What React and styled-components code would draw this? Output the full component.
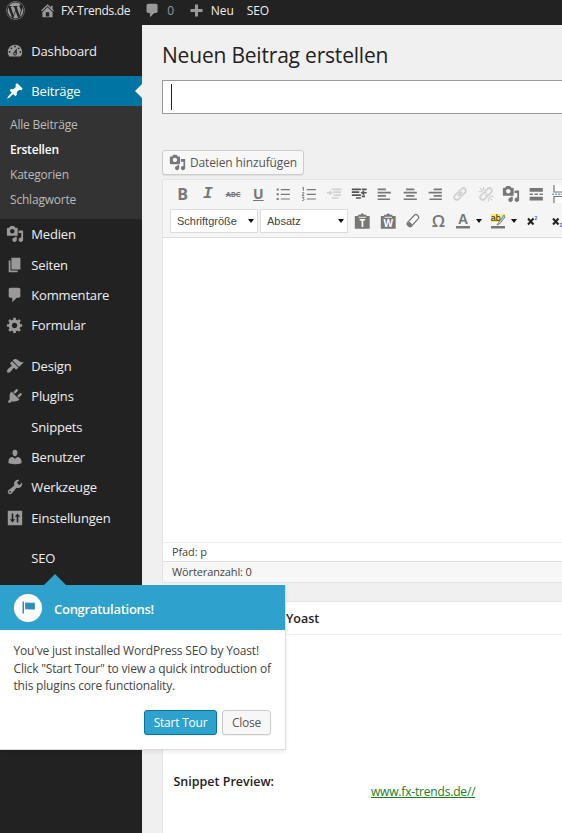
import React from "react";
import styled, { createGlobalStyle, css } from "styled-components";
import { FaWordpress } from "react-icons/fa";

const Global = createGlobalStyle`
  * { box-sizing: border-box; }
  html, body { margin: 0; padding: 0; }
  body { background: #f0f0f0; font-family: "Open Sans", sans-serif; font-size: 13px; color: #444; overflow: hidden; }
`;

const paths = {
  comments: "M5 2h9c1.1 0 2 .9 2 2v7c0 1.1-.9 2-2 2h-2l-5 5v-5H5c-1.1 0-2-.9-2-2V4c0-1.1.9-2 2-2z",
  post: "M10.44 3.02l1.82-1.82 6.36 6.35-1.83 1.82c-1.05-.68-2.48-.57-3.41.36l-.75.75c-.92.93-1.04 2.35-.35 3.41l-1.83 1.82-2.41-2.41-2.8 2.79c-.42.42-3.38 2.71-3.8 2.29s1.86-3.39 2.28-3.81l2.79-2.79L4.1 9.36l1.83-1.82c1.05.69 2.48.57 3.4-.36l.75-.75c.93-.92 1.05-2.35.36-3.41z",
  home: "M16 8.5l1.53 1.53-1.06 1.06L10 4.6l-6.47 6.49-1.06-1.06L10 2.5l4 4v-2h2v4zm-6-2.46l6 5.99V18H4v-5.97zM12 17v-5H8v5h4z",
  dashboard: "M3.76 16h12.48c1.1-1.37 1.76-3.11 1.76-5 0-4.42-3.58-8-8-8s-8 3.58-8 8c0 1.89.66 3.63 1.76 5zM10 4c.55 0 1 .45 1 1s-.45 1-1 1-1-.45-1-1 .45-1 1-1zM6 6c.55 0 1 .45 1 1s-.45 1-1 1-1-.45-1-1 .45-1 1-1zm8 0c.55 0 1 .45 1 1s-.45 1-1 1-1-.45-1-1 .45-1 1-1zm-5.37 5.55L12 7v6c0 1.1-.9 2-2 2s-2-.9-2-2c0-.57.24-1.08.63-1.45zM4 10c.55 0 1 .45 1 1s-.45 1-1 1-1-.45-1-1 .45-1 1-1zm12 0c.55 0 1 .45 1 1s-.45 1-1 1-1-.45-1-1 .45-1 1-1zm-5 3c0-.55-.45-1-1-1s-1 .45-1 1 .45 1 1 1 1-.45 1-1z",
  media: "M13 11V4c0-.55-.45-1-1-1h-1.67L9 1H5L3.67 3H2c-.55 0-1 .45-1 1v7c0 .55.45 1 1 1h10c.55 0 1-.45 1-1zM7 4.5c1.38 0 2.5 1.12 2.5 2.5S8.38 9.5 7 9.5 4.5 8.38 4.5 7 5.62 4.5 7 4.5zM14 6h5v10.5c0 1.38-1.12 2.5-2.5 2.5S14 17.88 14 16.5s1.12-2.5 2.5-2.5c.17 0 .34.02.5.05V9h-3V6zm-4 8.05V13h2v3.5c0 1.38-1.12 2.5-2.5 2.5S7 17.88 7 16.5 8.12 14 9.5 14c.17 0 .34.02.5.05z",
  page: "M6 15V2h10v13H6zm-1 1h8v2H3V5h2v11z",
  generic: "M18 12h-2.18c-.17.7-.44 1.35-.81 1.93l1.54 1.54-2.1 2.1-1.54-1.54c-.58.36-1.23.63-1.91.79V19H8v-2.18c-.68-.16-1.33-.43-1.91-.79l-1.54 1.54-2.12-2.12 1.54-1.54c-.36-.58-.63-1.23-.79-1.91H1V9.03h2.17c.16-.7.44-1.35.8-1.94L2.43 5.55l2.1-2.1 1.54 1.54c.58-.37 1.24-.64 1.93-.81V2h3v2.18c.68.16 1.33.43 1.91.79l1.54-1.54 2.12 2.12-1.54 1.54c.36.59.64 1.24.8 1.94H18V12zm-8.5 1.5c1.66 0 3-1.34 3-3s-1.34-3-3-3-3 1.34-3 3 1.34 3 3 3z",
  appearance: "M14.48 11.06L7.41 3.99l1.5-1.5c.5-.56 2.3-.47 3.51.32 1.21.8 1.43 1.28 2.91 2.1 1.18.64 2.45 1.26 4.45.85zm-.71.71L6.7 4.7 4.93 6.47c-.39.39-.39 1.02 0 1.41l1.06 1.06c.39.39.39 1.03 0 1.42-.6.6-1.43 1.11-2.21 1.69-.35.26-.7.53-1.01.84C1.43 14.23.4 16.08 1.4 17.07c.99 1 2.84-.03 4.18-1.36.31-.31.58-.66.85-1.02.57-.78 1.08-1.61 1.69-2.21.39-.39 1.02-.39 1.41 0l1.06 1.06c.39.39 1.02.39 1.41 0z",
  plugins: "M13.11 4.36L9.87 7.6 8 5.73l3.24-3.24c.35-.34 1.05-.2 1.56.32.52.51.66 1.21.31 1.55zm-8 1.77l.91-1.12 9.01 9.01-1.19.84c-.71.71-2.63 1.16-3.82 1.16H6.14L4.9 17.26c-.59.59-1.54.59-2.12 0-.59-.58-.59-1.53 0-2.12l1.24-1.24v-3.88c0-1.13.4-3.19 1.09-3.89zm7.26 3.97l3.24-3.24c.34-.35 1.04-.21 1.55.31.52.51.66 1.21.31 1.55l-3.24 3.25z",
  users: "M10 9.25c-2.27 0-2.73-3.44-2.73-3.44C7 4.02 7.82 2 9.97 2c2.16 0 2.98 2.02 2.71 3.81 0 0-.41 3.44-2.68 3.44zm0 2.57L12.72 10c2.39 0 4.52 2.33 4.52 4.53v2.49s-3.65 1.13-7.24 1.13c-3.65 0-7.24-1.13-7.24-1.13v-2.49c0-2.25 1.94-4.48 4.47-4.48z",
  tools: "M16.68 9.77c-1.34 1.34-3.3 1.67-4.95.99l-5.41 6.52c-.99.99-2.59.99-3.58 0s-.99-2.59 0-3.57l6.52-5.42c-.68-1.65-.35-3.61.99-4.95 1.28-1.28 3.12-1.62 4.72-1.06l-2.89 2.89 2.82 2.82 2.86-2.87c.53 1.58.18 3.39-1.08 4.65zM3.81 16.21c.4.39 1.04.39 1.43 0 .4-.4.4-1.04 0-1.43-.39-.4-1.03-.4-1.43 0-.39.39-.39 1.03 0 1.43z",
  settings: "M2.5 2h15c.3 0 .5.2.5.5v15c0 .3-.2.5-.5.5h-15c-.3 0-.5-.2-.5-.5v-15c0-.3.2-.5.5-.5zM6.3 5v6.500H4.200L7.200 15l3-3.500H8.100V5zM11.900 15V8.500H9.800L12.800 5l3 3.500H13.700V15z",
  plus: "M8 2h4v6h6v4h-6v6H8v-6H2V8h6z",
  flag: "M4 18V2H2v16h2zm1.500-5.500V3.500c4-.8 8 .4 13 0v9c-4.500.6-9-.8-13 0z",
  ul: "M2 3h2.500v2.500H2zM7 3.500h11v1.500H7zM2 8.800h2.500v2.500H2zM7 9.300h11v1.500H7zM2 14.500h2.500V17H2zM7 15h11v1.500H7z",
  left: "M2 3h10v2H2zM2 7h16v2H2zM2 11h10v2H2zM2 15h15v2H2z",
  center: "M5 3h10v2H5zM2 7h16v2H2zM5 11h10v2H5zM2 15h16v2H2z",
  right: "M8 3h10v2H8zM2 7h16v2H2zM8 11h10v2H8zM3 15h15v2H3z",
  indent: "M1 3h11v2H1zM1 6.500h9v2H1zM1 10h11v2H1zM6 13.500h6v2H6zM13 3h6v2h-6zM13 11.500h4v2h-4zM19 7.200v2h-3v2.300L11.500 8.200 16 5v2.200z",
  outdent: "M7 3h12v2H7zM9 6.500h9v2H9zM9 10h9v2H9zM7 13.500h8v2H7zM1 7.200h3V5l4.500 3.200L4 11.500V9.200H1z",
  more: "M2 2.500h16V7H2zM2 9h4v2H2zM8 9h4v2H8zM14 9h4v2h-4zM2 13h16v4.500H2z",
};

const Svg = styled.svg`
  display: block;
  flex: none;
  width: ${(p) => p.$size || 18}px;
  height: ${(p) => p.$size || 18}px;
  color: ${(p) => p.$color || "#999"};
  overflow: visible;
`;
const Icon = ({ name, size, color }) => (
  <Svg viewBox="0 0 20 20" $size={size} $color={color}>
    <path d={paths[name]} fill="currentColor" fillRule="evenodd" />
  </Svg>
);

const Screen = styled.div`
  position: relative;
  width: 562px;
  height: 833px;
  overflow: hidden;
  display: flex;
  flex-direction: column;
`;
const AdminBar = styled.header`
  height: 25px;
  flex: none;
  display: flex;
  align-items: center;
  padding: 0 0 4px 6px;
  background: #222;
  color: #eee;
  line-height: 20px;
`;
const BarItem = styled.span`
  display: flex;
  align-items: center;
  gap: ${(p) => p.$gap || 0}px;
  margin-right: ${(p) => p.$after || 0}px;
  color: ${(p) => (p.$muted ? "#999" : "#eee")};
  font-size: 12px;
  letter-spacing: ${(p) => p.$track || 0}px;
  svg { color: #999; }
`;
const Body = styled.div`
  flex: 1;
  min-height: 0;
  display: flex;
`;
const Sidebar = styled.nav`
  width: 142px;
  flex: none;
  background: #222;
  padding-top: 11px;
`;
const MenuItem = styled.div`
  height: 30.4px;
  display: flex;
  align-items: center;
  justify-content: space-between;
  margin-bottom: ${(p) => p.$after || 0}px;
  background: ${(p) => (p.$active ? "#0074a2" : "transparent")};
  color: ${(p) => (p.$active ? "#fff" : "#eee")};
  font-size: 13px;
  letter-spacing: -0.17px;
`;
const MenuLabel = styled.span`
  display: grid;
  grid-template-columns: 18px auto;
  column-gap: 7.300px;
  align-items: center;
  padding-left: 6px;
`;
const Notch = styled.span`
  border: 7px solid transparent;
  border-right-color: #f0f0f0;
  border-left: 0;
`;
const SubMenu = styled.div`
  background: #333;
  padding: 6px 0 6.500px 10px;
  height: 112.6px;
`;
const SubItem = styled.div`
  height: 25px;
  line-height: 25px;
  font-size: 12px;
  letter-spacing: -0.2px;
  color: ${(p) => (p.$current ? "#fff" : "#bbb")};
  font-weight: ${(p) => (p.$current ? 600 : 400)};
`;

const Main = styled.main`
  flex: 1;
  min-width: 0;
  padding-left: 20px;
  display: flex;
  flex-direction: column;
`;
const PageTitle = styled.h1`
  margin: 15px 0 10px;
  font-size: 21px;
  letter-spacing: -0.2px;
  font-weight: 400;
  line-height: 30px;
  color: #222;
`;
const TitleField = styled.div`
  height: 34px;
  flex: none;
  border: 1px solid #999;
  border-right: 0;
  background: #fff;
  display: flex;
  align-items: center;
  padding-left: 8px;
`;
const Caret = styled.span`
  width: 1px;
  height: 26px;
  background: #222;
`;
const button = css`
  display: flex;
  align-items: center;
  justify-content: center;
  height: 25px;
  border: 1px solid #ccc;
  border-radius: 3px;
  background: #f7f7f7;
  color: #555;
  box-shadow: 0 1px 0 rgba(0, 0, 0, 0.06);
`;
const MediaButton = styled.div`
  ${button}
  width: 142px;
  margin-top: 36px;
  gap: 4px;
  font-size: 12px;
  letter-spacing: -0.12px;
  flex: none;
`;
const Editor = styled.section`
  margin-top: 4px;
  border: 1px solid #e3e3e3;
  border-right: 0;
  background: #fff;
  flex: none;
`;
const Toolbar = styled.div`
  height: 58px;
  padding-left: 7px;
  background: #f5f5f5;
  border-bottom: 1px solid #ddd;
`;
const ToolRow = styled.div`
  display: flex;
  align-items: center;
  height: 27.500px;
`;
const Tool = styled.span`
  width: ${(p) => (p.$split ? 34.5 : 25.25)}px;
  gap: 4px;
  flex: none;
  display: flex;
  justify-content: center;
  align-items: center;
  color: #777;
  opacity: ${(p) => (p.$off ? 0.28 : 1)};
`;
const Glyph = styled.span`
  font-size: ${(p) => p.$size || 17}px;
  line-height: 20px;
  font-weight: ${(p) => p.$weight || 700};
  font-style: ${(p) => (p.$italic ? "italic" : "normal")};
  font-family: ${(p) => p.$font || '"Open Sans"'}, sans-serif;
  text-decoration: ${(p) => p.$line || "none"};
`;
const Select = styled.span`
  width: 88px;
  height: 24px;
  margin-right: 2px;
  flex: none;
  display: flex;
  align-items: center;
  justify-content: space-between;
  padding: 0 3px 0 6px;
  border: 1px solid #ddd;
  background: #fff;
  font: 11px "Liberation Sans", sans-serif;
  color: #444;
`;
const Down = styled.span`
  flex: none;
  border: 3.500px solid transparent;
  border-top: 4px solid #111;
  border-bottom: 0;
`;
const Canvas = styled.div`height: 304px;`;
const StatusLine = styled.div`
  height: ${(p) => (p.$tinted ? 21 : 19)}px;
  display: flex;
  align-items: center;
  padding: 0 0 ${(p) => (p.$tinted ? 1 : 2)}px 9px;
  border-top: 1px solid ${(p) => (p.$tinted ? "#ddd" : "#eee")};
  background: ${(p) => (p.$tinted ? "#f7f7f7" : "#fff")};
  font-size: 11px;
  letter-spacing: -0.12px;
  color: #444;
`;
const MetaBox = styled.section`
  margin-top: 18px;
  flex: 1;
  border: 1px solid #e5e5e5;
  border-width: 1px 0 0 1px;
  background: #fff;
  color: #222;
`;
const MetaHead = styled.h2`
  margin: 0;
  height: 33px;
  line-height: 33px;
  padding-left: 10px;
  border-bottom: 1px solid #eee;
  font-size: 12.500px;
  font-weight: 600;
`;
const SnippetRow = styled.div`
  display: grid;
  grid-template-columns: 197.500px auto;
  padding: 137px 0 0 10.500px;
  font-size: 12px;
  line-height: 20px;
`;
const SnippetLabel = styled.span`
  font-size: 12.500px;
  font-weight: 600;
`;
const SnippetUrl = styled.a`
  margin-top: 10px;
  letter-spacing: -0.18px;
  color: #1b7d1b;
  text-decoration: underline;
`;

const Pointer = styled.aside`
  position: absolute;
  left: 0;
  top: 585px;
  width: 286px;
  height: 165px;
  background: #fff;
  border: solid #ddd;
  border-width: 0 1px 1px 0;
  box-shadow: 0 2px 4px rgba(0, 0, 0, 0.08);
`;
const PointerArrow = styled.span`
  position: absolute;
  left: 44px;
  top: -11px;
  border: 11px solid transparent;
  border-bottom-color: #2ea2cc;
  border-top: 0;
`;
const PointerHead = styled.h3`
  margin: 0;
  height: 45px;
  padding-left: 14px;
  display: flex;
  align-items: center;
  gap: 12px;
  background: #2ea2cc;
  color: #fff;
  font-size: 13px;
  letter-spacing: -0.27px;
  font-weight: 600;
`;
const PointerTitle = styled.span`padding-top: 2px;`;
const Badge = styled.span`
  width: 28px;
  height: 28px;
  border-radius: 50%;
  background: #fff;
  display: grid;
  place-items: center;
`;
const PointerText = styled.p`
  margin: 12px 0 0 13.500px;
  font-size: 12px;
  letter-spacing: -0.18px;
  line-height: 17.600px;
  white-space: pre-line;
`;
const PointerActions = styled.div`
  display: flex;
  justify-content: flex-end;
  gap: 5px;
  padding: 15px 14px 0 0;
`;
const PointerButton = styled.span`
  ${button}
  width: ${(p) => (p.$primary ? 73 : 49)}px;
  font-size: 12px;
  letter-spacing: -0.22px;
  ${(p) => p.$primary && css`
    background: #2ea2cc;
    border-color: #0074a2;
    color: #fff;
  `}
`;

const menuTop = [{ icon: "dashboard", label: "Dashboard", after: 9.6 }, { icon: "post", label: "Beiträge", active: true }];
const submenu = ["Alle Beiträge", "Erstellen", "Kategorien", "Schlagworte"];
const menuRest = [
  { icon: "media", label: "Medien" },
  { icon: "page", label: "Seiten" },
  { icon: "comments", label: "Kommentare" },
  { icon: "generic", label: "Formular", after: 10.2 },
  { icon: "appearance", label: "Design" },
  { icon: "plugins", label: "Plugins" },
  { label: "Snippets" },
  { icon: "users", label: "Benutzer" },
  { icon: "tools", label: "Werkzeuge" },
  { icon: "settings", label: "Einstellungen", after: 9.8 },
  { label: "SEO" },
];

const Entry = ({ icon, label, active, after }) => (
  <MenuItem $active={active} $after={after}>
    <MenuLabel>
      {icon ? <Icon name={icon} color={active ? "#fff" : "#999"} /> : <span />}
      {label}
    </MenuLabel>
    {active && <Notch />}
  </MenuItem>
);

const Btn = ({ name, off, size = 16.5, color = "#777" }) => (
  <Tool $off={off}><Icon name={name} size={size} color={color} /></Tool>
);

const OrderedList = () => (
  <Svg viewBox="0 0 20 20" $size={16.5} $color="#777">
    <path d="M7 3.500h11V5H7zM7 9.300h11v1.500H7zM7 15h11v1.500H7z" fill="currentColor" />
    <path d="M1.500 2.500 3 1.500V6M1.200 8.200h2.300v1.300L1.200 11.500h2.600M1.200 13.800h2.500L2.500 15.500c2 0 1.500 2.500-1.300 2" fill="none" stroke="currentColor" strokeWidth="1.100" />
  </Svg>
);
const Link = ({ broken }) => (
  <Svg viewBox="0 0 20 20" $size={16} $color="#777">
    <g fill="none" stroke="currentColor" strokeWidth="2.200" strokeLinecap="round">
      <path d="M9 6.500 12 3.500c3-2.500 7 1 4.500 4.500l-3 3c-1 1-2.500 1-3.500.5" />
      <path d="M11 13.500 8 16.500c-3 2.500-7-1-4.500-4.500l3-3c1-1 2.500-1 3.500-.5" />
      {broken ? <path d="M3 3l3 3M7 1.500v3M1.500 7h3M14 14l3 3M13 16v3M16 13h3" strokeWidth="1.500" /> : <path d="M8 12l4-4" />}
    </g>
  </Svg>
);
const PageBreak = () => (
  <Svg viewBox="0 0 20 20" $size={20} $color="#777">
    <path d="M3 1v7h15V1M3 19v-6.500h15V19" fill="#fff" stroke="currentColor" strokeWidth="1.200" />
    <path d="M1 10.200h18" stroke="#5584bb" strokeDasharray="2 1" />
  </Svg>
);
const Clipboard = ({ letter }) => (
  <Svg viewBox="0 0 20 20" $size={16.5} $color="#777">
    <path d="M1 3.500h4V2h3C8 0 12 0 12 2h3v1.500h4V19H1z" fill="currentColor" />
    <path d="M5.500 5.200h9" stroke="#f5f5f5" strokeWidth="1.200" />
    <text x="10" y="16.500" textAnchor="middle" fontSize="12" fontWeight="700" fontFamily="Open Sans, sans-serif" fill="#fff">{letter}</text>
  </Svg>
);
const Eraser = () => (
  <Svg viewBox="0 0 20 20" $size={16} $color="#777">
    <path d="M3 12 12 2.500c1-1 2-1 3 0l1.500 1.500c1 1 1 2 0 3L8 16.500c-1 1-2 1-3 0L3 14.800c-.8-.8-.8-2 0-2.800z" fill="#fff" stroke="currentColor" strokeWidth="1.600" />
    <path d="M3 13 5.500 10.500 9 14l-2 2.500H5L2.500 15z" fill="currentColor" />
  </Svg>
);
const TextColor = () => (
  <Svg viewBox="0 0 16 18" $size={18} $color="#777">
    <text x="8" y="12" textAnchor="middle" fontSize="14" fontWeight="700" fontFamily="Liberation Sans, sans-serif" fill="currentColor">A</text>
    <path d="M1 14h14v2.500H1z" fill="currentColor" />
  </Svg>
);
const Highlight = () => (
  <Svg viewBox="0 0 16 18" $size={18} $color="#777">
    <path d="M1 2h9v8H1zM11 2h4v3h-4z" fill="#f5ee55" />
    <text x="0.800" y="9" fontSize="9" fontFamily="Liberation Sans, sans-serif" fill="#222">ab</text>
    <path d="M14 3 8.500 10.500 7 13l3-1.500L15 5z" fill="#bcd0dc" stroke="#777" strokeWidth=".9" />
    <path d="M1 14h14v2.500H1z" fill="currentColor" />
  </Svg>
);
const Script = ({ low }) => (
  <Svg viewBox="0 0 16 16" $size={16}>
    <path d="M3 5.500l5.500 6M8.500 5.500l-5.500 6" stroke="#222" strokeWidth="2" />
    <text x="9.500" y={low ? 13.500 : 6.500} fontSize="5" fontWeight="700" fontFamily="Liberation Sans, sans-serif" fill="#3a67c2">2</text>
  </Svg>
);

export default function App() {
  return (
    <Screen>
      <Global />
      <AdminBar>
        <BarItem $after={13.5}><FaWordpress size={19} /></BarItem>
        <BarItem $gap={5.5} $after={14} $track={-0.3}><Icon name="home" size={17} />FX-Trends.de</BarItem>
        <BarItem $gap={6} $after={15} $muted><Icon name="comments" size={17} />0</BarItem>
        <BarItem $gap={6.5} $after={13}><Icon name="plus" size={15} />Neu</BarItem>
        <BarItem $track={-0.2}>SEO</BarItem>
      </AdminBar>
      <Body>
        <Sidebar>
          {menuTop.map((m) => <Entry key={m.label} {...m} />)}
          <SubMenu>
            {submenu.map((s) => <SubItem key={s} $current={s === "Erstellen"}>{s}</SubItem>)}
          </SubMenu>
          {menuRest.map((m) => <Entry key={m.label} {...m} />)}
        </Sidebar>
        <Main>
          <PageTitle>Neuen Beitrag erstellen</PageTitle>
          <TitleField><Caret /></TitleField>
          <MediaButton><Icon name="media" size={17} color="#777" />Dateien hinzufügen</MediaButton>
          <Editor>
            <Toolbar>
              <ToolRow>
                <Tool><Glyph $size={16}>B</Glyph></Tool>
                <Tool><Glyph $italic $size={16} $font='"Liberation Mono"'>I</Glyph></Tool>
                <Tool><Glyph $size={7.5} $line="line-through">ABC</Glyph></Tool>
                <Tool><Glyph $size={14} $line="underline">U</Glyph></Tool>
                <Btn name="ul" />
                <Tool><OrderedList /></Tool>
                <Btn name="outdent" off />
                <Btn name="indent" color="#555" />
                <Btn name="left" />
                <Btn name="center" />
                <Btn name="right" />
                <Tool $off><Link /></Tool>
                <Tool $off><Link broken /></Tool>
                <Btn name="media" size={18} />
                <Btn name="more" />
                <Tool><PageBreak /></Tool>
              </ToolRow>
              <ToolRow>
                <Select>Schriftgröße<Down /></Select>
                <Select>Absatz<Down /></Select>
                <Tool><Clipboard letter="T" /></Tool>
                <Tool><Clipboard letter="W" /></Tool>
                <Tool><Eraser /></Tool>
                <Tool><Glyph $weight={600}>Ω</Glyph></Tool>
                <Tool $split><TextColor /><Down /></Tool>
                <Tool $split><Highlight /><Down /></Tool>
                <Tool><Script /></Tool>
                <Tool><Script low /></Tool>
              </ToolRow>
            </Toolbar>
            <Canvas />
            <StatusLine>Pfad: p</StatusLine>
            <StatusLine $tinted>Wörteranzahl: 0</StatusLine>
          </Editor>
          <MetaBox>
            <MetaHead>WordPress SEO by Yoast</MetaHead>
            <SnippetRow>
              <SnippetLabel>Snippet Preview:</SnippetLabel>
              <SnippetUrl>www.fx-trends.de//</SnippetUrl>
            </SnippetRow>
          </MetaBox>
        </Main>
      </Body>
      <Pointer>
        <PointerArrow />
        <PointerHead>
          <Badge><Icon name="flag" size={15} color="#2e8fb8" /></Badge>
          <PointerTitle>Congratulations!</PointerTitle>
        </PointerHead>
        <PointerText>{'You\'ve just installed WordPress SEO by Yoast!\nClick "Start Tour" to view a quick introduction of\nthis plugins core functionality.'}</PointerText>
        <PointerActions>
          <PointerButton $primary>Start Tour</PointerButton>
          <PointerButton>Close</PointerButton>
        </PointerActions>
      </Pointer>
    </Screen>
  );
}
